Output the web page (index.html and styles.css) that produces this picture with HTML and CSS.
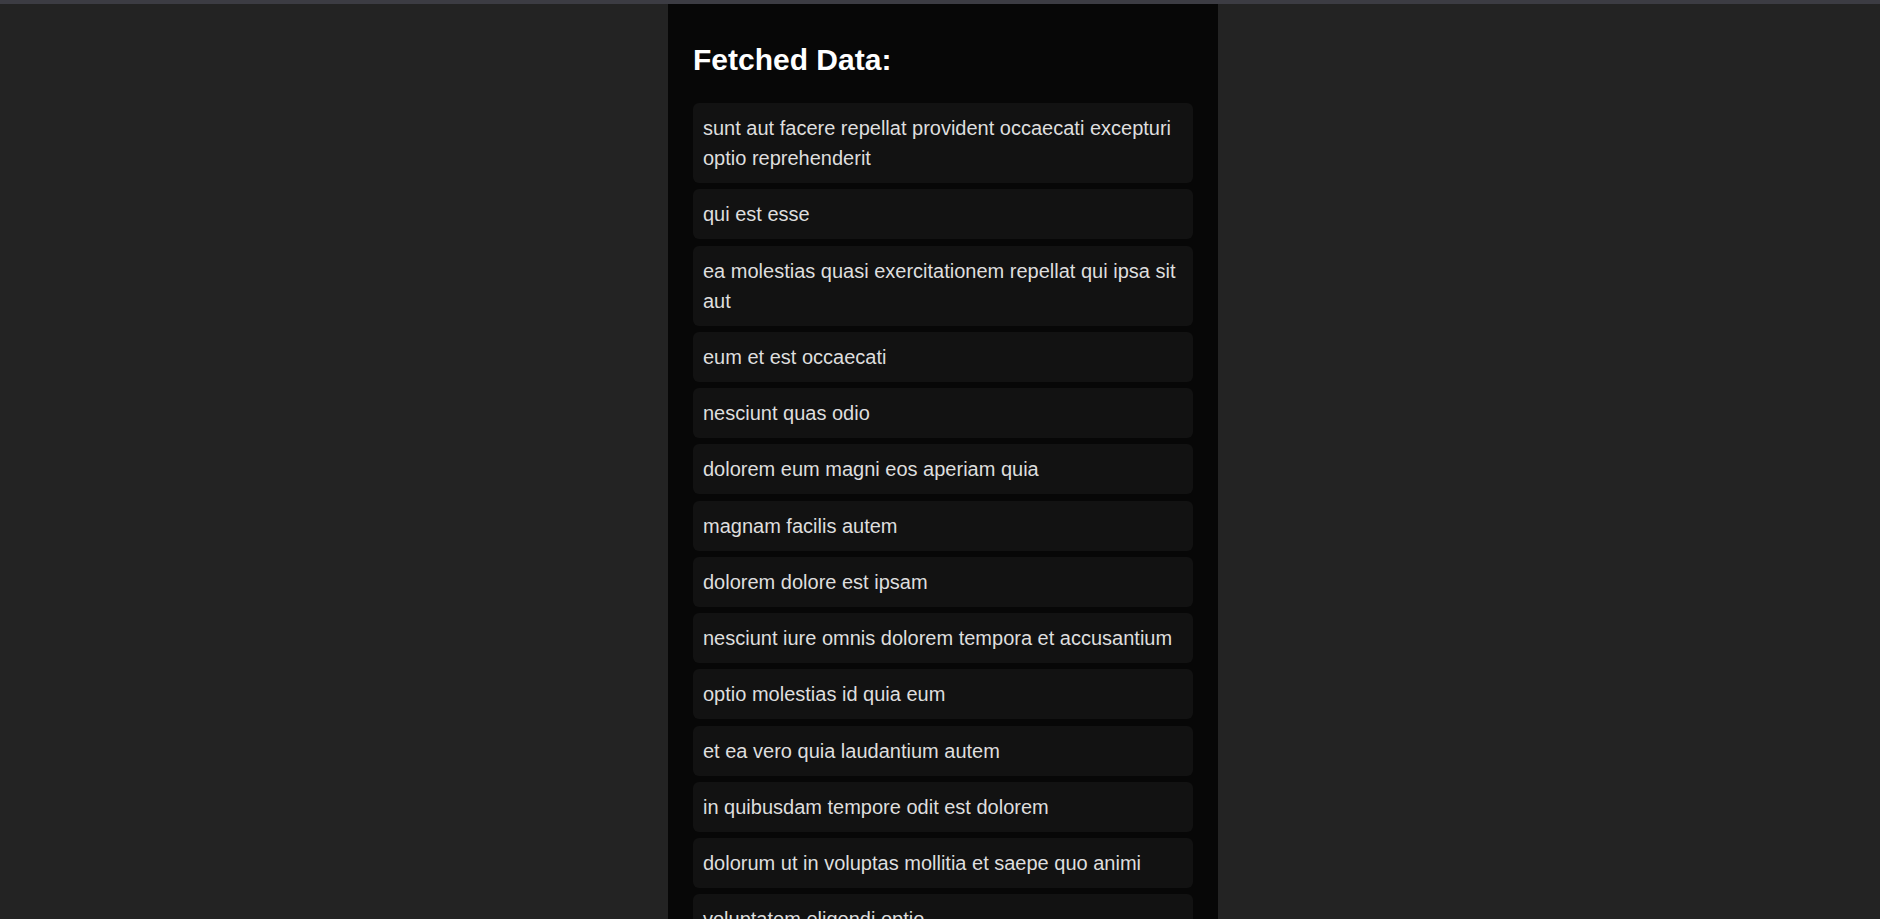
FILE: index.html
```html
<!DOCTYPE html>
<html lang="en">
<head>
<meta charset="utf-8">
<title>Fetched Data</title>
<link rel="stylesheet" href="styles.css">
</head>
<body>
<div class="topbar"></div>
<div class="page">
  <main class="panel">
    <h2 class="title">Fetched Data:</h2>
    <ul class="list">
      <li class="item">sunt aut facere repellat provident occaecati excepturi optio reprehenderit</li>
      <li class="item">qui est esse</li>
      <li class="item">ea molestias quasi exercitationem repellat qui ipsa sit aut</li>
      <li class="item">eum et est occaecati</li>
      <li class="item">nesciunt quas odio</li>
      <li class="item">dolorem eum magni eos aperiam quia</li>
      <li class="item">magnam facilis autem</li>
      <li class="item">dolorem dolore est ipsam</li>
      <li class="item">nesciunt iure omnis dolorem tempora et accusantium</li>
      <li class="item">optio molestias id quia eum</li>
      <li class="item">et ea vero quia laudantium autem</li>
      <li class="item">in quibusdam tempore odit est dolorem</li>
      <li class="item">dolorum ut in voluptas mollitia et saepe quo animi</li>
      <li class="item">voluptatem eligendi optio</li>
      <li class="item">eveniet quod temporibus</li>
      <li class="item">sint suscipit perspiciatis velit dolorum rerum ipsa laboriosam odio</li>
      <li class="item">fugit voluptas sed molestias voluptatem provident</li>
      <li class="item">voluptate et itaque vero tempora molestiae</li>
    </ul>
  </main>
</div>
</body>
</html>
```
FILE: styles.css
```css
html {
  overflow: hidden;
}
body {
  margin: 0;
  background: #232323;
  font-family: "Liberation Sans", Arial, sans-serif;
  color: #dedede;
}
.topbar {
  height: 4px;
  background: #3c3c43;
}
.page {
  display: flex;
  justify-content: center;
  padding-left: 6px;
}
.panel {
  width: 550px;
  box-sizing: border-box;
  background: #070707;
  padding: 39px 25px 25px;
  min-height: 1200px;
}
.title {
  margin: 0 0 26px;
  font-size: 30px;
  line-height: 34px;
  font-weight: bold;
  color: #ffffff;
}
.list {
  list-style: none;
  margin: 0;
  padding: 0;
  display: flex;
  flex-direction: column;
  gap: 6.25px;
}
.item {
  background: #121212;
  border-radius: 6px;
  padding: 10px;
  font-size: 20px;
  line-height: 30px;
  color: #dedede;
}
```
